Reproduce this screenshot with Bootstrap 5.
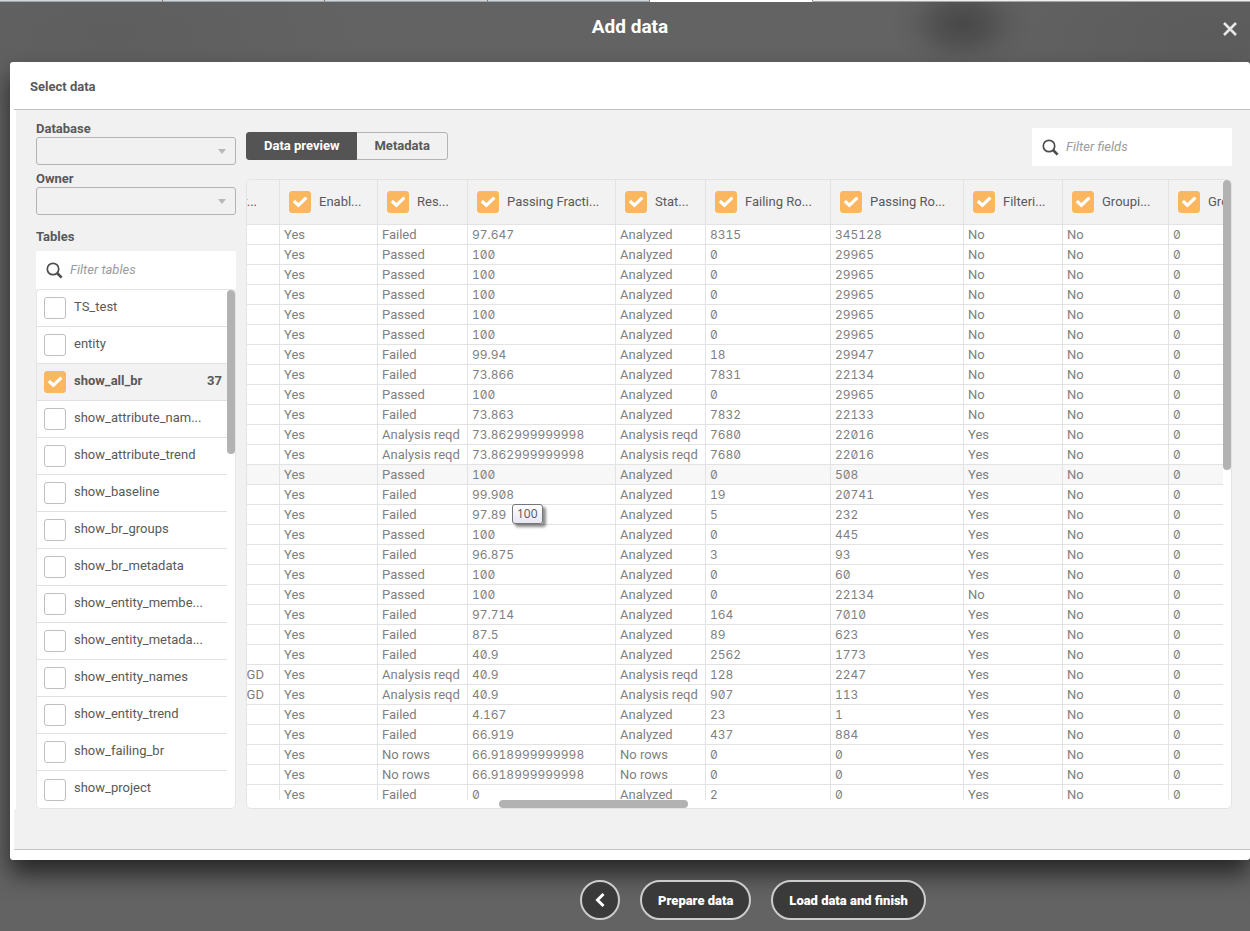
<!DOCTYPE html>
<html lang="en">
<head>
<meta charset="utf-8">
<meta name="viewport" content="width=device-width, initial-scale=1">
<title>Add data</title>
<link href="https://cdn.jsdelivr.net/npm/bootstrap@5.3.0/dist/css/bootstrap.min.css" rel="stylesheet">
<style>
  body { font-family: Roboto, "Open Sans", sans-serif; font-size: 13px; line-height: 20px; color: #595959; background: #636363; }
  .app { height: 100vh; background: radial-gradient(ellipse 72px 50px at 77% 24px, #484848, rgba(74,74,74,.75) 35%, rgba(80,80,80,.25) 70%, transparent), radial-gradient(ellipse 260px 90px at 97% 34px, #5b5b5b, transparent), radial-gradient(ellipse 260px 90px at 9% 34px, #5e5e5e, transparent), #636363; }
  .tabstrip { height: 2px; flex: none; background: #d3d6d9; }
  .tabstrip div { width: 13%; border-right: 1px solid #777; border-bottom: 1px solid #a3a6a8; }
  .tabstrip .current { background: #fff; border-bottom-color: #fff; }
  .tabstrip .rest { flex: 1; background: #eef0f1; border-right: 0; }
  .titlebar { height: 60px; flex: none; position: relative; }
  .titlebar h1 { font-size: 19px; line-height: 24px; font-weight: 700; color: #fff; padding: 13px 0 0 10px; }
  .close-x { position: absolute; right: 12px; top: 18px; width: 16px; height: 18px; color: #e6e6e6; }
  .dialog { margin-left: 10px; background: #fff; border-radius: 3px; box-shadow: 0 14px 24px rgba(0,0,0,.62); min-height: 0; position: relative; }
  .dialog-head { height: 48px; flex: none; margin-left: 4px; padding: 15px 16px 0; border-bottom: 1px solid #bfbfbf; }
  .dialog h2 { font-size: 13px; line-height: 20px; font-weight: 700; margin: 0; color: #595959; }
  .dialog-main { background: #f1f1f1; margin-left: 6px; padding: 0 18px 0 20px; gap: 10px; min-height: 0; }
  .dialog-base { height: 41px; flex: none; margin: 0 0 10px 4px; background: #f1f1f1; border-bottom: 1px solid #c4c4c4; }
  .side { width: 200px; flex: none; padding-top: 10px; }
  .side label, .side h2 { font-weight: 700; line-height: 17px; color: #595959; display: block; }
  .side h2 { padding: 8px 0 6px; line-height: 17px; }
  .drop { height: 28px; margin-bottom: 5px; border: 1px solid #b3b3b3; border-radius: 3px; font-size: 13px; background: transparent url("data:image/svg+xml,%3Csvg xmlns='http://www.w3.org/2000/svg' viewBox='0 0 8 5'%3E%3Cpath d='M0 0h8L4 5z' fill='%23b8b8b8'/%3E%3C/svg%3E") no-repeat right 9px center / 8px 5px; }
  .finder { background: #fff; height: 38px; padding: 0 10px; gap: 7px; flex: none; }
  .finder input { font: italic 13px/20px Roboto, sans-serif; border: 0; outline: 0; background: none; min-width: 0; width: 100%; padding: 0; color: #595959; }
  .finder input::placeholder { color: #9b9b9b; opacity: 1; }
  .finder svg { width: 17px; height: 17px; flex: none; }
  .field-finder { width: 200px; }
  .panel { display: grid; background: #fff; border: 1px solid #e3e3e3; border-radius: 5px; min-height: 0; min-width: 0; overflow: hidden; }
  .list-panel { grid-template: minmax(0, 1fr) / minmax(0, 1fr) 8px; flex: 1; }
  .data-panel { grid-template: minmax(0, 1fr) 8px / minmax(0, 1fr) 8px; flex: 1; }
  .view { overflow: hidden; min-height: 0; }
  .thumb { background: #b2b2b2; border-radius: 4px; }
  .table-names .list-group-item { height: 37px; padding: 0 5px 0 7px; gap: 8px; border: 0; border-bottom: 1px solid #e0e0e0; color: #595959; background: #fff; border-radius: 0; }
  .table-names .list-group-item:last-child { border-bottom: 0; }
  .table-names .chosen { background: #f2f2f2; font-weight: 700; }
  .table-names label { font-weight: inherit; color: inherit; line-height: 20px; padding-bottom: 3px; width: 130px; }
  .table-names .tally { padding-bottom: 3px; margin-left: auto; }
  .form-check-input.tick { width: 22px; height: 22px; flex: none; margin: 0; border: 1px solid #bfbfbf; border-radius: 3px; background-color: #fff; }
  .form-check-input.tick:checked { border-color: #fbb660; background: #fbb660 url("data:image/svg+xml,%3Csvg xmlns='http://www.w3.org/2000/svg' viewBox='0 0 22 22'%3E%3Cpath d='M4.8 10 9.4 14.2 17.4 6.6' fill='none' stroke='%23fff' stroke-width='3.2'/%3E%3C/svg%3E") center / 22px 22px no-repeat; }
  .toolbar { height: 69px; flex: none; padding-top: 18px; }
  .switch .btn { height: 28px; font-size: 13px; line-height: 20px; padding: 3px 17px; font-weight: 700; color: #595959; border: 1px solid #b3b3b3; border-radius: 3px; }
  .switch .btn.active { background: #545454; border-color: #545454; color: #fff; }
  .fields { table-layout: fixed; width: 1097px; border-collapse: separate; border-spacing: 0; color: #7f7f7f; }
  .fields th, .fields td { border: 0 solid #e3e3e3; border-width: 0 1px 1px 0; white-space: nowrap; }
  .fields th { height: 45px; background: #f2f2f2; padding: 0 0 0 9px; font-weight: 400; color: #595959; }
  .fields th label { padding-left: 8px; }
  .fields th:first-child { padding: 0 22px 0 0; }
  .fields td { height: 20px; padding: 0 0 0 4px; line-height: 19px; position: relative; }
  .fields td.cut { padding: 0 15px 0 0; }
  .cut > div { display: flex; justify-content: flex-end; overflow: hidden; }
  .fields .num-cell { font-family: Inter, sans-serif; font-size: 12px; font-feature-settings: "tnum", "zero"; }
  .fields .hovered td { background: #f7f7f7; }
  .hint { position: absolute; left: 44px; top: 39px; z-index: 2; width: 31px; height: 20px; border: 1px solid #767676; border-radius: 3px; background: linear-gradient(#fff, #e6e7f2); box-shadow: 3px 3px 3px rgba(0,0,0,.45); font: 12px/18px "Open Sans", sans-serif; font-feature-settings: normal; color: #5f5158; padding-left: 4px; }
  .actions { flex: none; padding: 20px 0 11px; gap: 20px; margin-left: 256px; position: relative; }
  .actions .btn { height: 40px; border: 2px solid #ccc; border-radius: 20px; background: #3a3a3a; color: #fff; font-size: 13px; line-height: 20px; font-weight: 900; padding: 9px 16px 7px; }
  .actions .back { width: 40px; padding: 0; }
</style>
</head>
<body>
<div class="app d-flex flex-column overflow-hidden">
  <div class="tabstrip d-flex"><div></div><div></div><div></div><div></div><div class="current"></div><div class="rest"></div></div>
  <header class="titlebar text-center">
    <h1 class="m-0">Add data</h1>
    <button class="close-x btn p-0 border-0 d-flex" type="button" aria-label="Close"><svg viewBox="0 0 16 18" width="16" height="18"><path d="M2 3l12 12M14 3 2 15" stroke="currentColor" stroke-width="2.6"/></svg></button>
  </header>

  <section class="dialog d-flex flex-column flex-grow-1">
    <div class="dialog-head"><h2>Select data</h2></div>
    <div class="dialog-main d-flex flex-grow-1">
      <div class="side d-flex flex-column">
        <label for="database">Database</label>
        <select id="database" class="form-select drop"></select>
        <label for="owner">Owner</label>
        <select id="owner" class="form-select drop"></select>
        <h2>Tables</h2>
        <div class="finder d-flex align-items-center">
          <svg viewBox="0 0 17 17" aria-hidden="true"><circle cx="7" cy="7" r="5.7" fill="none" stroke="#4d4d4d" stroke-width="1.7"/><path d="m11 11 4.6 4.6" stroke="#4d4d4d" stroke-width="2.7"/></svg>
          <input type="text" placeholder="Filter tables" aria-label="Filter tables">
        </div>
        <div class="panel list-panel">
          <div class="view"><ul class="list-group table-names" id="tableNames"></ul></div>
          <div><div class="thumb" style="height:31.6%"></div></div>
        </div>
      </div>

      <div class="d-flex flex-column flex-grow-1" style="min-width:0">
        <div class="toolbar d-flex justify-content-between align-items-start">
          <div class="btn-group switch pt-1">
            <button type="button" class="btn active">Data preview</button>
            <button type="button" class="btn">Metadata</button>
          </div>
          <div class="finder field-finder d-flex align-items-center">
            <svg viewBox="0 0 17 17" aria-hidden="true"><circle cx="7" cy="7" r="5.7" fill="none" stroke="#4d4d4d" stroke-width="1.7"/><path d="m11 11 4.6 4.6" stroke="#4d4d4d" stroke-width="2.7"/></svg>
            <input type="text" placeholder="Filter fields" aria-label="Filter fields">
          </div>
        </div>
        <div class="panel data-panel">
          <div class="view">
            <table class="fields">
              <colgroup><col style="width:33px"><col style="width:98px"><col style="width:90px"><col style="width:148px"><col style="width:90px"><col style="width:125px"><col style="width:133px"><col style="width:99px"><col style="width:106px"><col style="width:175px"></colgroup>
              <thead><tr id="fieldHeads"></tr></thead>
              <tbody id="fieldRows"></tbody>
            </table>
          </div>
          <div><div class="thumb" style="height:46.8%"></div></div>
          <div><div class="thumb h-100" style="width:19.4%;margin-left:25.8%"></div></div>
        </div>
      </div>
    </div>
    <div class="dialog-base"></div>
  </section>

  <footer class="actions d-flex justify-content-center">
    <button type="button" class="btn back d-flex align-items-center justify-content-center" aria-label="Back"><svg width="12" height="16" viewBox="0 0 12 16"><path d="M9.5 2 3.5 8l6 6" fill="none" stroke="#fff" stroke-width="3"/></svg></button>
    <button type="button" class="btn">Prepare data</button>
    <button type="button" class="btn">Load data and finish</button>
  </footer>
</div>

<script>
  const names = ['TS_test', 'entity', 'show_all_br', 'show_attribute_nam...', 'show_attribute_trend', 'show_baseline', 'show_br_groups', 'show_br_metadata', 'show_entity_membe...', 'show_entity_metada...', 'show_entity_names', 'show_entity_trend', 'show_failing_br', 'show_project'];
  document.getElementById('tableNames').innerHTML = names.map((n, i) => {
    const on = n === 'show_all_br';
    return `<li class="list-group-item d-flex align-items-center${on ? ' chosen' : ''}"><input class="form-check-input tick" type="checkbox" id="t${i}"${on ? ' checked' : ''}><label for="t${i}">${n}</label>${on ? '<span class="tally">37</span>' : ''}</li>`;
  }).join('');

  const heads = ['Enabl...', 'Res...', 'Passing Fracti...', 'Stat...', 'Failing Ro...', 'Passing Ro...', 'Filteri...', 'Groupi...', 'Gro...'];
  document.getElementById('fieldHeads').innerHTML = '<th class="cut"><div>r...</div></th>' + heads.map((h, i) =>
    `<th><div class="d-flex align-items-center"><input class="form-check-input tick" type="checkbox" id="f${i}" checked><label for="f${i}">${h}</label></div></th>`).join('');

  // result | passing fraction | status | failing rows | passing rows | filtering
  const rows = `Failed|97.647|Analyzed|8315|345128|No
Passed|100|Analyzed|0|29965|No
Passed|100|Analyzed|0|29965|No
Passed|100|Analyzed|0|29965|No
Passed|100|Analyzed|0|29965|No
Passed|100|Analyzed|0|29965|No
Failed|99.94|Analyzed|18|29947|No
Failed|73.866|Analyzed|7831|22134|No
Passed|100|Analyzed|0|29965|No
Failed|73.863|Analyzed|7832|22133|No
Analysis reqd|73.862999999998|Analysis reqd|7680|22016|Yes
Analysis reqd|73.862999999998|Analysis reqd|7680|22016|Yes
Passed|100|Analyzed|0|508|Yes
Failed|99.908|Analyzed|19|20741|Yes
Failed|97.89|Analyzed|5|232|Yes
Passed|100|Analyzed|0|445|Yes
Failed|96.875|Analyzed|3|93|Yes
Passed|100|Analyzed|0|60|Yes
Passed|100|Analyzed|0|22134|No
Failed|97.714|Analyzed|164|7010|Yes
Failed|87.5|Analyzed|89|623|Yes
Failed|40.9|Analyzed|2562|1773|Yes
Analysis reqd|40.9|Analysis reqd|128|2247|Yes
Analysis reqd|40.9|Analysis reqd|907|113|Yes
Failed|4.167|Analyzed|23|1|Yes
Failed|66.919|Analyzed|437|884|Yes
No rows|66.918999999998|No rows|0|0|Yes
No rows|66.918999999998|No rows|0|0|Yes
Failed|0|Analyzed|2|0|Yes`.split('\n');
  document.getElementById('fieldRows').innerHTML = rows.map((line, i) => {
    const v = line.split('|');
    const hovered = i === 12;
    const tip = hovered ? '<span class="hint">100</span>' : '';
    const first = i === 22 || i === 23 ? 'GD' : '';
    return `<tr${hovered ? ' class="hovered"' : ''}><td class="cut"><div>${first}</div></td><td>Yes</td><td>${v[0]}</td><td class="num-cell">${v[1]}${tip}</td><td>${v[2]}</td><td class="num-cell">${v[3]}</td><td class="num-cell">${v[4]}</td><td>${v[5]}</td><td>No</td><td class="num-cell">0</td></tr>`;
  }).join('');
</script>
<script src="https://cdn.jsdelivr.net/npm/bootstrap@5.3.0/dist/js/bootstrap.bundle.min.js"></script>
</body>
</html>
